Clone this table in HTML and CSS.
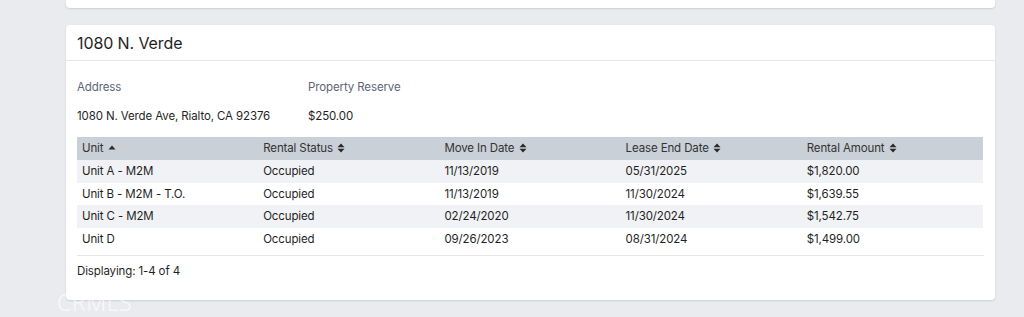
FILE: index.html
```html
<!DOCTYPE html>
<html>
<head>
<meta charset="utf-8">
<link rel="stylesheet" href="styles.css">
</head>
<body>
<div class="page">
  <div class="card card-prev"></div>
  <div class="card">
    <div class="card-header">1080 N. Verde</div>
    <div class="card-body">
      <div class="info">
        <div class="info-col addr">
          <div class="label">Address</div>
          <div class="value">1080 N. Verde Ave, Rialto, CA 92376</div>
        </div>
        <div class="info-col">
          <div class="label">Property Reserve</div>
          <div class="value">$250.00</div>
        </div>
      </div>
      <table class="units">
        <thead>
          <tr>
            <th>Unit <svg class="sort" viewBox="0 0 8 10"><path d="M0.5 6.5 L4 2.5 L7.5 6.5 Z"/></svg></th>
            <th>Rental Status <svg class="sort" viewBox="0 0 8 10"><path d="M0.5 4.3 L4 0.5 L7.5 4.3 Z M0.5 5.7 L4 9.5 L7.5 5.7 Z"/></svg></th>
            <th>Move In Date <svg class="sort" viewBox="0 0 8 10"><path d="M0.5 4.3 L4 0.5 L7.5 4.3 Z M0.5 5.7 L4 9.5 L7.5 5.7 Z"/></svg></th>
            <th>Lease End Date <svg class="sort" viewBox="0 0 8 10"><path d="M0.5 4.3 L4 0.5 L7.5 4.3 Z M0.5 5.7 L4 9.5 L7.5 5.7 Z"/></svg></th>
            <th>Rental Amount <svg class="sort" viewBox="0 0 8 10"><path d="M0.5 4.3 L4 0.5 L7.5 4.3 Z M0.5 5.7 L4 9.5 L7.5 5.7 Z"/></svg></th>
          </tr>
        </thead>
        <tbody>
          <tr><td>Unit A - M2M</td><td>Occupied</td><td>11/13/2019</td><td>05/31/2025</td><td>$1,820.00</td></tr>
          <tr><td>Unit B - M2M - T.O.</td><td>Occupied</td><td>11/13/2019</td><td>11/30/2024</td><td>$1,639.55</td></tr>
          <tr><td>Unit C - M2M</td><td>Occupied</td><td>02/24/2020</td><td>11/30/2024</td><td>$1,542.75</td></tr>
          <tr><td>Unit D</td><td>Occupied</td><td>09/26/2023</td><td>08/31/2024</td><td>$1,499.00</td></tr>
        </tbody>
      </table>
      <div class="footer">Displaying: 1-4 of 4</div>
    </div>
  </div>
  <div class="watermark">CRMLS</div>
</div>
</body>
</html>
```

FILE: styles.css
```css
html, body {
  margin: 0;
  padding: 0;
  background: #eaebef;
  font-family: Inter, "Noto Sans", sans-serif;
  color: #1f1f1f;
  overflow: hidden;
}
.page {
  position: relative;
  width: 929px;
  margin-left: 66px;
  height: 317px;
}
.card {
  background: #fff;
  border-radius: 4px;
  box-shadow: 0 1px 2px rgba(0,0,0,0.12);
}
.card-prev {
  height: 8px;
  border-radius: 0 0 4px 4px;
  margin-bottom: 17px;
}
.card-header {
  height: 36px;
  box-sizing: border-box;
  padding: 0 11px;
  display: flex;
  align-items: center;
  font-size: 16px;
  letter-spacing: -0.1px;
  color: #1f1f1f;
  border-bottom: 1px solid #e4e6ea;
}
.card-body {
  padding: 0 11px;
  height: 239px;
  font-size: 11.5px;
  letter-spacing: -0.12px;
}
.info {
  display: flex;
  padding-top: 18px;
}
.info-col.addr {
  width: 231px;
}
.label {
  color: #5b6578;
  height: 16px;
  line-height: 16px;
}
.value {
  color: #1f1f1f;
  margin-top: 13px;
  height: 16px;
  line-height: 16px;
}
.units {
  margin-top: 13px;
  width: 906px;
  border-collapse: collapse;
  table-layout: fixed;
  font-size: 11.5px;
}
.units th {
  background: #c9d0d8;
  font-weight: normal;
  text-align: left;
  color: #333;
  height: 23px;
  padding: 0 0 0 5px;
  line-height: 23px;
}
.units td {
  height: 22.5px;
  padding: 0 0 0 5px;
  line-height: 22.5px;
  color: #1f1f1f;
}
.units tbody tr:nth-child(odd) td {
  background: #f1f2f5;
}
.sort {
  width: 8px;
  height: 10px;
  fill: #2a2a2a;
  vertical-align: -1px;
  margin-left: 1px;
}
.footer {
  margin-top: 5px;
  border-top: 1px solid #e4e6ea;
  padding-top: 7px;
  line-height: 16px;
  color: #1f1f1f;
}
.watermark {
  position: absolute;
  left: -9px;
  top: 289px;
  font-size: 23px;
  line-height: 26px;
  font-weight: 300;
  letter-spacing: 0.5px;
  color: rgba(255,255,255,0.7);
  font-family: "Noto Sans", sans-serif;
}
```
